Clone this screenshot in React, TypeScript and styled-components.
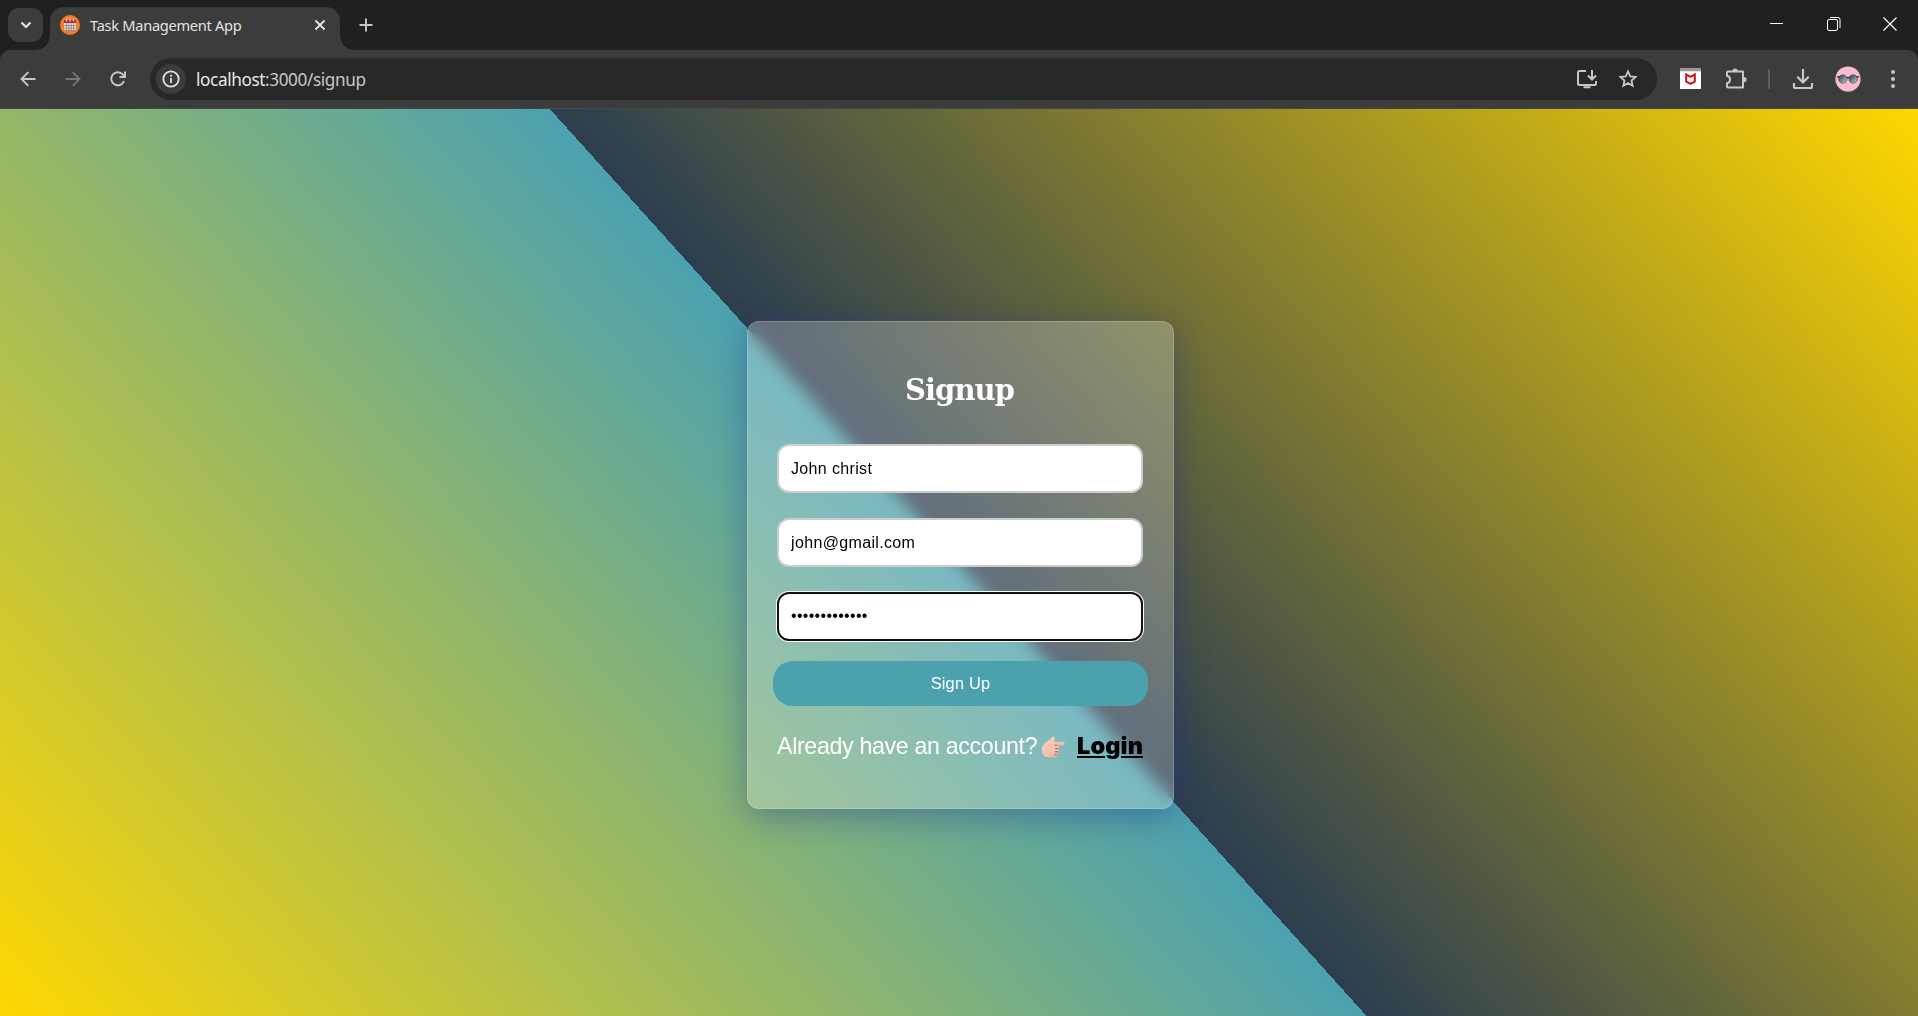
import React from "react";
import styled, { createGlobalStyle } from "styled-components";

const Global = createGlobalStyle`
  html, body, #root { height: 100%; }
  body { margin: 0; overflow: hidden; background: #3c3c3c; }
  * { box-sizing: border-box; }
`;

const Window = styled.div`
  display: flex;
  flex-direction: column;
  width: 100%;
  height: 100vh;
  background: #1f2120;
  font-family: "Noto Sans", "Open Sans", sans-serif;
`;

const TabStrip = styled.header`
  display: flex;
  align-items: flex-start;
  height: 50px;
  padding-left: 8px;
  flex: none;
`;

const TabSearch = styled.button`
  display: grid;
  place-items: center;
  width: 35px;
  height: 34px;
  margin-top: 8px;
  padding: 0;
  border: 0;
  border-radius: 11px;
  background: #3c3c3c;
`;

const Tab = styled.div`
  position: relative;
  display: flex;
  align-items: center;
  width: 290px;
  height: 43px;
  margin: 7px 0 0 7px;
  padding: 0 14px 7px 10px;
  border-radius: 14px 14px 0 0;
  background: #3c3c3c;
  &::before, &::after {
    content: "";
    position: absolute;
    bottom: 0;
    width: 14px;
    height: 14px;
  }
  &::before { left: -14px; background: radial-gradient(circle at 0 0, transparent 13.5px, #3c3c3c 14px); }
  &::after { right: -14px; background: radial-gradient(circle at 100% 0, transparent 13.5px, #3c3c3c 14px); }
`;

const TabTitle = styled.span`
  flex: 1;
  margin-left: 10px;
  color: #e3e3e3;
  font-size: 14.6px;
  letter-spacing: -0.28px;
  line-height: 20px;
  white-space: nowrap;
`;

const NewTab = styled.div`
  margin: 18px 0 0 19px;
  line-height: 0;
`;

const WindowControls = styled.div`
  display: flex;
  margin-left: auto;
`;

const Control = styled.div`
  display: grid;
  place-items: center;
  width: 57px;
  height: 48px;
  &:last-child { width: 56px; }
`;

const Toolbar = styled.nav`
  display: flex;
  align-items: center;
  height: 59px;
  flex: none;
  padding-bottom: 1px;
  background: #3c3c3c;
  border-bottom: 1px solid #474747;
  border-radius: 10px 10px 0 0;
`;

const IconSlot = styled.div<{ $w: number }>`
  display: grid;
  place-items: center;
  flex: none;
  width: ${(p) => p.$w}px;
  height: 42px;
  svg { display: block; }
`;

const AddressBar = styled.div`
  display: flex;
  align-items: center;
  flex: 1;
  height: 42px;
  padding: 0 8px 0 6px;
  border-radius: 21px;
  background: #282828;
`;

const SiteInfo = styled.div`
  display: grid;
  place-items: center;
  width: 30px;
  height: 30px;
  border-radius: 50%;
  background: #3c3c3c;
`;

const Url = styled.div`
  flex: 1;
  margin-left: 10px;
  color: #c7c7c7;
  font-size: 17.2px;
  letter-spacing: -0.4px;
  line-height: 24px;
  padding-top: 3px;
  b { color: #e8e8e8; font-weight: 400; }
`;

const Separator = styled.i`
  width: 2px;
  height: 20px;
  border-radius: 1px;
  background: #5f5f5f;
`;

const Page = styled.main`
  display: flex;
  flex: 1;
  align-items: center;
  justify-content: center;
  padding: 5px 0 0 3px;
  background: linear-gradient(48deg, #ffd700, #4ca1af 49.97%, #2c3e50 49.97%, #ffd700);
  font-family: "Liberation Sans", Arial, sans-serif;
`;

const Card = styled.form`
  display: flex;
  flex-direction: column;
  width: 427px;
  height: 488px;
  padding: 46px 29px 0;
  border: 1px solid rgba(255, 255, 255, 0.18);
  border-radius: 12px;
  background: rgba(255, 255, 255, 0.25);
  box-shadow: 0 8px 32px 0 rgba(31, 38, 135, 0.37);
  backdrop-filter: blur(8px);
`;

const Title = styled.h1`
  margin: 0 0 32px;
  padding-right: 2px;
  height: 44px;
  color: #fff;
  text-align: center;
  font: bold 29px/44px "DejaVu Serif", Georgia, serif;
  letter-spacing: -0.95px;
`;

const Field = styled.input`
  width: 366px;
  height: 49px;
  margin: 0 0 25px;
  padding: 0 12px;
  border: 2px solid #ccc;
  border-radius: 12px;
  background: #fff;
  color: #000;
  font: 16px "Liberation Sans", Arial, sans-serif;
  letter-spacing: 0.35px;
  &[type="password"] {
    margin-bottom: 20px;
    padding-bottom: 2px;
    letter-spacing: 0.3px;
    border-color: #101010;
    box-shadow: 0 0 0 1px #fff;
    outline: none;
  }
`;

const Submit = styled.button`
  width: 375px;
  height: 45px;
  margin: 0 -4px 24px;
  padding: 0;
  border: 0;
  border-radius: 20px;
  background: #4ca1af;
  color: #fff;
  font: 16.4px "Liberation Sans", Arial, sans-serif;
  letter-spacing: 0.2px;
`;

const Prompt = styled.p`
  display: flex;
  align-items: center;
  width: 366px;
  height: 32px;
  margin: 0;
  color: #fff;
  font-size: 23.2px;
  letter-spacing: -0.33px;
  white-space: nowrap;
  svg { margin: 1px 0 0 4px; flex: none; }
`;

const Login = styled.a`
  margin-left: auto;
  color: #000;
  font: 900 23.5px/32px Inter, sans-serif;
  letter-spacing: 0.1px;
  text-decoration: underline;
  text-decoration-thickness: 2px;
  text-underline-offset: 2px;
`;

const Stroke = ({ size = 20, w = 2, color = "#c7c7c7", d }: { size?: number; w?: number; color?: string; d: string }) => (
  <svg width={size} height={size} viewBox={`0 0 ${size} ${size}`} fill="none" stroke={color} strokeWidth={w}>
    <path d={d} />
  </svg>
);

const Favicon = () => (
  <svg width="20" height="20" viewBox="0 0 20 20">
    <circle cx="10" cy="10" r="10" fill="#f47b27" />
    <path d="M4 6h12v9.5H4z" fill="#e9e3df" />
    <path d="M4 5h12v3H4z" fill="#c8202f" />
    <path d="M6.5 3.5v3M10 3.5v3M13.5 3.5v3" stroke="#f6e8e0" strokeWidth="1.1" />
    <path d="M4 10.5h12M4 13h12M6.4 8v7.5M8.8 8v7.5M11.2 8v7.5M13.6 8v7.5M4 15.3h12" stroke="#77797c" strokeWidth=".7" />
  </svg>
);

const Shield = () => (
  <svg width="21" height="21" viewBox="0 0 21 21">
    <path d="M0 0h21v21H0z" fill="#fff" />
    <path d="M0 0h21v3.3H0z" fill="#9b9999" />
    <path d="M6.2 6.5v7.2l4.3 2.2 4.3-2.2V6.5l-4.3 2.3z" fill="none" stroke="#c8161d" strokeWidth="2" />
  </svg>
);

const Avatar = () => (
  <svg width="26" height="26" viewBox="0 0 26 26">
    <defs>
      <linearGradient id="lens" x1="0" y1="0" x2="1" y2="1">
        <stop offset="0" stopColor="#2c3e42" />
        <stop offset=".55" stopColor="#6f8a8e" />
        <stop offset="1" stopColor="#d2d6d8" />
      </linearGradient>
    </defs>
    <circle cx="13" cy="13" r="12.6" fill="#f8bbd0" />
    <g fill="url(#lens)" stroke="#4a3b40" strokeWidth=".6">
      <circle cx="7.8" cy="13" r="4.2" />
      <circle cx="18.2" cy="13" r="4.2" />
    </g>
    <path d="M1.8 10.8h3M21.2 10.8h3M11.6 12q1.400-1.200 2.800 0" fill="none" stroke="#33262a" strokeWidth="1.3" />
  </svg>
);

const Hand = () => (
  <svg width="24" height="22" viewBox="0 0 24 22">
    <defs>
      <linearGradient id="skin" x1="0" y1="0" x2="1" y2="1">
        <stop offset="0" stopColor="#fbd3c3" />
        <stop offset="1" stopColor="#efae9d" />
      </linearGradient>
    </defs>
    <path
      d="M1 11.5C2 7.5 6 5.4 8.6 3.9 10 3 10.4 .8 12 .6c1.8-.2 2.4 1.6 1.6 3.3L12.8 5.8h9c2.5 0 2.500 3.400 0 3.400h-5c1.700.5 1.800 2.700.4 3.300 1.400.8 1.200 2.900-.3 3.300 1 1 .6 2.800-.8 3 .4 1.500-.6 2.400-2 2.400H7C2.800 21.200 0 17 1 11.500z"
      fill="url(#skin)"
    />
    <path d="M16 9.200h-2.200M17 12.500h-2.400M16.700 15.800h-2.400M15.900 18.800h-2" stroke="#8d5548" strokeWidth=".8" strokeLinecap="round" />
  </svg>
);

export default function App() {
  return (
    <Window>
      <Global />
      <TabStrip>
        <TabSearch aria-label="Search tabs"><Stroke size={12} w={2.2} color="#e3e3e3" d="M1.5 3.5L6 8l4.5-4.5" /></TabSearch>
        <Tab>
          <Favicon />
          <TabTitle>Task Management App</TabTitle>
          <Stroke size={12} w={1.9} color="#e3e3e3" d="M1.5 1.5l9 9M10.5 1.5l-9 9" />
        </Tab>
        <NewTab><Stroke size={14} w={1.9} d="M7 .5v13M.5 7h13" /></NewTab>
        <WindowControls>
          <Control><Stroke size={14} w={1} color="#fff" d="M0 6.5h13" /></Control>
          <Control>
            <svg width="14" height="14" viewBox="0 0 14 14" fill="none" stroke="#fff">
              <rect x=".5" y="2.5" width="10" height="11" rx="1.5" />
              <path d="M3 .5h8a2 2 0 0 1 2 2v8.5" />
            </svg>
          </Control>
          <Control><Stroke size={14} w={1.2} color="#fff" d="M.5.5l13 13M13.5.5l-13 13" /></Control>
        </WindowControls>
      </TabStrip>
      <Toolbar>
        <IconSlot $w={55}><Stroke size={16} w={1.9} d="M15.5 8H1.5M8.3 1.2L1.5 8l6.8 6.8" /></IconSlot>
        <IconSlot $w={35}><Stroke size={16} w={1.9} color="#757575" d="M.5 8h14M7.7 1.2L14.5 8l-6.8 6.8" /></IconSlot>
        <IconSlot $w={55}><Stroke size={16} w={2} d="M14 10.2A6.6 6.6 0 1 1 12.8 3.4L15 5.6M15 .5v5.4H9.5" /></IconSlot>
        <IconSlot $w={5} />
        <AddressBar>
          <SiteInfo>
            <svg width="18" height="18" viewBox="0 0 18 18" fill="none" stroke="#e3e3e3" strokeWidth="1.8">
              <circle cx="9" cy="9" r="7.7" /><path d="M9 8v5M9 4.8v1.9" />
            </svg>
          </SiteInfo>
          <Url><b>localhost</b>:3000/signup</Url>
          <IconSlot $w={40}>
            <Stroke size={22} w={2} d="M10 3H3.5Q2 3 2 4.5v11Q2 17 3.5 17h15q1.5 0 1.5-1.5V13M7.5 19.2h7M16 2v9M12 7.5l4 4 4-4" />
          </IconSlot>
          <IconSlot $w={42}>
            <Stroke size={20} w={1.8} d="M10 2.4l2.2 5 5.4.5-4.1 3.6 1.2 5.3L10 14l-4.7 2.8 1.2-5.3L2.400 7.900l5.400-.5z" />
          </IconSlot>
        </AddressBar>
        <IconSlot $w={21} />
        <IconSlot $w={24}><Shield /></IconSlot>
        <IconSlot $w={22} />
        <IconSlot $w={24}>
          <svg width="22" height="22" viewBox="0 0 22 22" fill="none" stroke="#c7c7c7" strokeWidth="2">
            <path d="M2 4.5Q2 3.5 3 3.5h15v16H3q-1 0-1-1V15c4 0 4-7 0-7z" strokeLinejoin="round" />
            <path d="M7.5 3a2.6 2.6 0 0 1 5.2 0M19 9a2.6 2.6 0 0 1 0 5.2" fill="#c7c7c7" stroke="none" />
          </svg>
        </IconSlot>
        <IconSlot $w={41}><Separator /></IconSlot>
        <IconSlot $w={28}><Stroke size={22} w={2.2} d="M2 15v3.5Q2 20 3.5 20h15q1.5 0 1.5-1.5V15M11 1v13M5.3 8.7L11 14.4l5.700-5.700" /></IconSlot>
        <IconSlot $w={62}><Avatar /></IconSlot>
        <IconSlot $w={28}>
          <svg width="6" height="20" viewBox="0 0 6 20" fill="#c7c7c7"><circle cx="3" cy="3" r="2" /><circle cx="3" cy="10" r="2" /><circle cx="3" cy="17" r="2" /></svg>
        </IconSlot>
        <IconSlot $w={11} />
      </Toolbar>
      <Page>
        <Card>
          <Title>Signup</Title>
          <Field type="text" defaultValue="John christ" />
          <Field type="email" defaultValue="john@gmail.com" />
          <Field type="password" defaultValue="johnchrist123" />
          <Submit type="button">Sign Up</Submit>
          <Prompt>Already have an account?<Hand /><Login>Login</Login></Prompt>
        </Card>
      </Page>
    </Window>
  );
}
